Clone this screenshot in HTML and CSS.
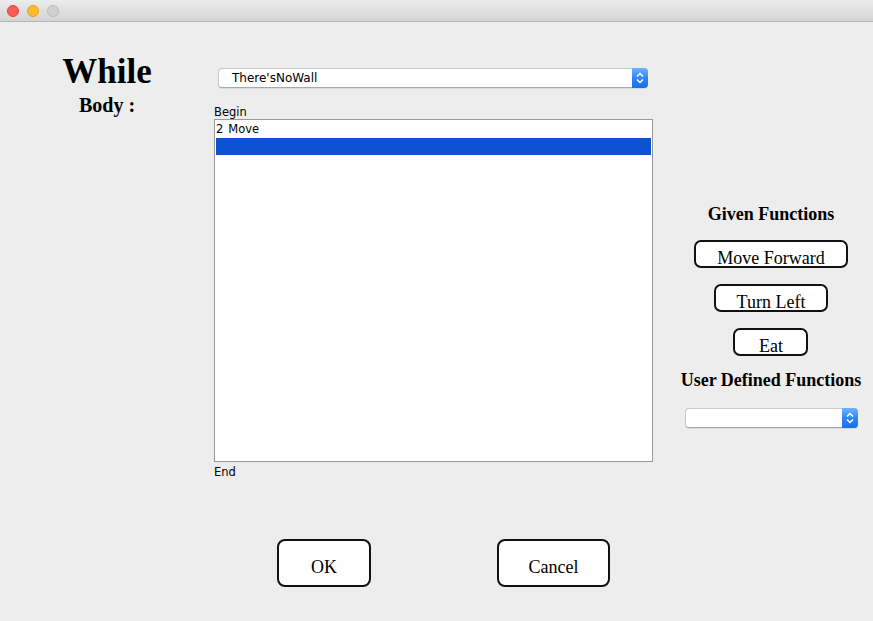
FILE: index.html
```html
<!DOCTYPE html>
<html>
<head>
<meta charset="utf-8">
<title>While</title>
<link rel="stylesheet" href="styles.css">
</head>
<body>
<div class="window">
  <div class="titlebar">
    <span class="light red"></span>
    <span class="light yellow"></span>
    <span class="light grey"></span>
  </div>
  <div class="content">
    <div class="top">
      <div class="left">
        <div class="while">While</div>
        <div class="body-label">Body :</div>
      </div>
      <div class="center">
        <div class="combo wide">
          <span class="combo-text">There'sNoWall</span>
          <span class="combo-arrow">
            <svg width="16" height="20" viewBox="0 0 16 20"><polyline points="5,8.5 8,5.5 11,8.5" fill="none" stroke="#fff" stroke-width="1.5"/><polyline points="5,11.5 8,14.5 11,11.5" fill="none" stroke="#fff" stroke-width="1.5"/></svg>
          </span>
        </div>
        <div class="label begin">Begin</div>
        <div class="list">
          <div class="row"><span class="num">2</span>Move</div>
          <div class="row selected"></div>
        </div>
        <div class="label end">End</div>
      </div>
      <div class="right">
        <div class="heading given">Given Functions</div>
        <div class="btn-stack">
          <button class="fn">Move Forward</button>
          <button class="fn">Turn Left</button>
          <button class="fn">Eat</button>
        </div>
        <div class="heading user">User Defined Functions</div>
        <div class="combo small">
          <span class="combo-text"></span>
          <span class="combo-arrow">
            <svg width="16" height="20" viewBox="0 0 16 20"><polyline points="5,8.5 8,5.5 11,8.5" fill="none" stroke="#fff" stroke-width="1.5"/><polyline points="5,11.5 8,14.5 11,11.5" fill="none" stroke="#fff" stroke-width="1.5"/></svg>
          </span>
        </div>
      </div>
    </div>
    <div class="bottom">
      <button class="dlg ok">OK</button>
      <button class="dlg cancel">Cancel</button>
    </div>
  </div>
</div>
</body>
</html>
```

FILE: styles.css
```css
html, body {
  margin: 0;
  padding: 0;
  background: #ededed;
}
.window {
  width: 873px;
  height: 621px;
  background: #ededed;
  overflow: hidden;
}
.titlebar {
  height: 21px;
  border-bottom: 1px solid #b6b6b6;
  background: linear-gradient(#ececec, #d4d4d4);
  display: flex;
  align-items: center;
  gap: 8px;
  padding-left: 7px;
  box-sizing: content-box;
}
.light {
  width: 12px;
  height: 12px;
  border-radius: 50%;
  box-sizing: border-box;
}
.red { background: #fc5b57; border: 1px solid #e0443e; }
.yellow { background: #fdbc2e; border: 1px solid #dea123; }
.grey { background: #d0d0d0; border: 1px solid #bcbcbc; }

.top {
  display: grid;
  grid-template-columns: 214px 439px 1fr;
}
.left {
  padding-top: 31px;
  text-align: center;
  font-family: "Liberation Serif", serif;
  font-weight: bold;
}
.while {
  font-size: 35px;
  line-height: 38px;
}
.body-label {
  margin-top: 3px;
  font-size: 20px;
  line-height: 22px;
}
.center {
  display: flex;
  flex-direction: column;
}
.combo {
  height: 20px;
  background: #fff;
  border: 1px solid #c8c8c8;
  border-bottom-color: #a9a9a9;
  border-radius: 4px;
  box-sizing: border-box;
  display: flex;
  align-items: stretch;
  box-shadow: 0 1px 0 rgba(0,0,0,0.08);
}
.combo.wide {
  margin-top: 46px;
  margin-left: 4px;
  width: 430px;
}
.combo-text {
  flex: 1;
  font-family: "DejaVu Sans", sans-serif;
  font-size: 12px;
  line-height: 18px;
  padding-left: 13px;
  color: #000;
}
.combo-arrow {
  width: 16px;
  margin: -1px -1px -1px 0;
  border-radius: 0 4px 4px 0;
  background: linear-gradient(#6db4fd, #2a82f7 55%, #1670f0);
  display: flex;
  align-items: center;
  justify-content: center;
}
.label {
  font-family: "DejaVu Sans", sans-serif;
  font-size: 11.5px;
  line-height: 14px;
  color: #000;
}
.begin { margin-top: 17px; }
.end { margin-top: 3px; }
.list {
  height: 343px;
  box-sizing: border-box;
  border: 1px solid #9a9a9a;
  background: #fff;
  padding: 1px;
}
.row {
  height: 17px;
  font-family: "DejaVu Sans", sans-serif;
  font-size: 11.5px;
  line-height: 17px;
  color: #000;
}
.num {
  margin-right: 5px;
}
.row.selected {
  background: #0b52d1;
}
.right {
  padding-left: 16px;
  display: flex;
  flex-direction: column;
  align-items: center;
}
.heading {
  font-family: "Liberation Serif", serif;
  font-weight: bold;
  font-size: 18px;
  line-height: 22px;
  white-space: nowrap;
}
.given { margin-top: 181px; }
.user { margin-top: 13px; }
.btn-stack {
  margin-top: 15px;
  display: flex;
  flex-direction: column;
  align-items: center;
  gap: 16px;
}
.fn, .dlg {
  font-family: "Liberation Serif", serif;
  font-size: 18px;
  line-height: 18px;
  color: #000;
  background: #fff;
  border: 2px solid #111;
  box-sizing: border-box;
  margin: 0;
  white-space: nowrap;
}
.fn {
  height: 28px;
  min-width: 75px;
  padding: 7px 21px 0;
  border-radius: 7px;
}
.combo.small {
  margin-top: 17px;
  width: 173px;
}
.bottom {
  display: flex;
  margin-top: 60px;
  padding-left: 277px;
  gap: 126px;
}
.dlg {
  height: 48px;
  padding: 17px 0 9px;
  border-radius: 8px;
}
.ok { width: 94px; }
.cancel { width: 113px; }
```
